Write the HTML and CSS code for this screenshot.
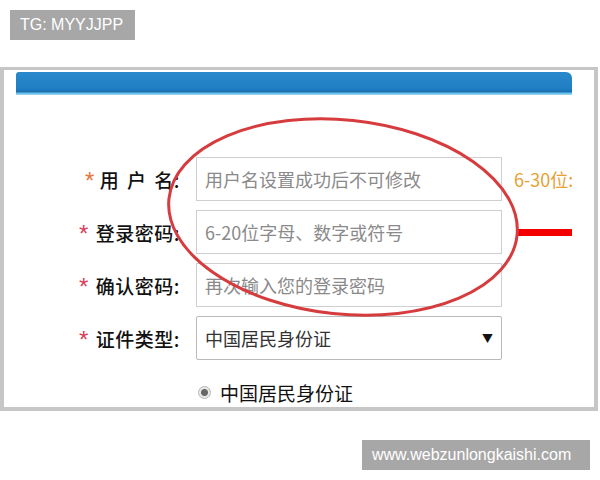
FILE: index.html
```html
<!DOCTYPE html>
<html lang="zh-CN">
<head>
<meta charset="utf-8">
<title>注册</title>
<link rel="stylesheet" href="styles.css">
</head>
<body>
<div class="tag tag-top">TG: MYYJJPP</div>
<div class="frame">
  <div class="inner">
    <div class="bar"></div>
    <div class="form">
      <div class="row">
        <div class="label"><span class="star star-orange">*</span><span class="spaced">用 户 名:</span></div>
        <div class="field">用户名设置成功后不可修改</div>
        <div class="hint">6-30位:</div>
      </div>
      <div class="row">
        <div class="label"><span class="star">*</span>登录密码:</div>
        <div class="field">6-20位字母、数字或符号</div>
        <div class="redline"></div>
      </div>
      <div class="row">
        <div class="label"><span class="star">*</span>确认密码:</div>
        <div class="field">再次输入您的登录密码</div>
      </div>
      <div class="row">
        <div class="label"><span class="star">*</span>证件类型:</div>
        <div class="field select"><span>中国居民身份证</span><span class="arrow">▼</span></div>
      </div>
      <div class="radio-row">
        <span class="radio"></span><span>中国居民身份证</span>
      </div>
    </div>
  </div>
  <svg class="ellipse" width="600" height="340" viewBox="0 0 600 340">
    <ellipse cx="343" cy="150" rx="175" ry="97" transform="rotate(6 343 150)" fill="none" stroke="#d63b3e" stroke-width="3"/>
  </svg>
</div>
<div class="tag tag-bottom">www.webzunlongkaishi.com</div>
</body>
</html>
```

FILE: styles.css
```css
html, body {
  margin: 0;
  padding: 0;
  background: #ffffff;
  font-family: "Noto Sans CJK SC", "Liberation Sans", sans-serif;
}

body {
  position: relative;
  width: 600px;
  height: 480px;
  overflow: hidden;
}

.tag {
  position: absolute;
  background: #a7a7a7;
  color: #ffffff;
  font-family: "Liberation Sans", Arial, sans-serif;
  font-size: 16px;
  line-height: 30px;
  height: 30px;
  box-sizing: border-box;
}

.tag-top {
  left: 10px;
  top: 10px;
  width: 125px;
  padding-left: 10px;
}

.tag-bottom {
  left: 362px;
  top: 440px;
  width: 228px;
  padding-left: 10px;
}

.frame {
  position: relative;
  margin-top: 67px;
  width: 598px;
  height: 344px;
  box-sizing: border-box;
  border-style: solid;
  border-color: #c6c6c6;
  border-width: 3px 4px 4px 4px;
  background: #fff;
}

.inner {
  margin-left: 12px;
  width: 556px;
  height: 337px;
  overflow: hidden;
}

.bar {
  margin-top: 2px;
  height: 23px;
  border-radius: 3px 6px 0 0;
  background: linear-gradient(to bottom, #2a88cc 0%, #1f7dc2 75%, #1a6fae 85%, #5fbbe8 92%, #a8dcf4 100%);
}

.form {
  margin-top: 62px;
  display: flex;
  flex-direction: column;
  gap: 9px;
}

.row {
  display: flex;
  align-items: center;
  height: 44px;
}

.label {
  width: 164px;
  flex: none;
  font-size: 19px;
  font-weight: 500;
  color: #111;
  display: flex;
  justify-content: flex-end;
  align-items: center;
  margin-right: 16px;
  letter-spacing: 0.5px;
}

.star {
  color: #d8405a;
  font-family: "Liberation Sans", sans-serif;
  font-size: 24px;
  line-height: 20px;
  margin-right: 7px;
  position: relative;
  top: 2px;
  font-weight: 400;
}

.star-orange {
  color: #e8743a;
  margin-right: 5px;
}

.spaced {
  word-spacing: 3px;
}

.field {
  flex: none;
  width: 306px;
  height: 44px;
  box-sizing: border-box;
  border: 1px solid #cfcfcf;
  padding-left: 8px;
  display: flex;
  align-items: center;
  font-size: 18px;
  color: #8a8a8a;
  background: #fff;
}

.select {
  justify-content: space-between;
  padding-right: 8px;
  color: #333;
  border-color: #b9b9b9;
  border-radius: 2px;
}

.arrow {
  font-size: 11px;
  color: #111;
}

.hint {
  flex: none;
  margin-left: 12px;
  font-size: 18px;
  color: #e8a033;
  white-space: nowrap;
}

.redline {
  flex: none;
  margin-left: 14px;
  width: 60px;
  height: 7px;
  background: #f40000;
}

.radio-row {
  display: flex;
  align-items: center;
  margin-left: 182px;
  margin-top: 10px;
  font-size: 19px;
  color: #111;
  height: 26px;
}

.radio {
  width: 13px;
  height: 13px;
  border-radius: 50%;
  border: 1px solid #b5b5b5;
  background: radial-gradient(circle, #666 0, #666 3px, #e6e6e6 4px, #f2f2f2 100%);
  margin-right: 9px;
  box-sizing: border-box;
}

.ellipse {
  position: absolute;
  left: -4px;
  top: -3px;
  pointer-events: none;
}
```
